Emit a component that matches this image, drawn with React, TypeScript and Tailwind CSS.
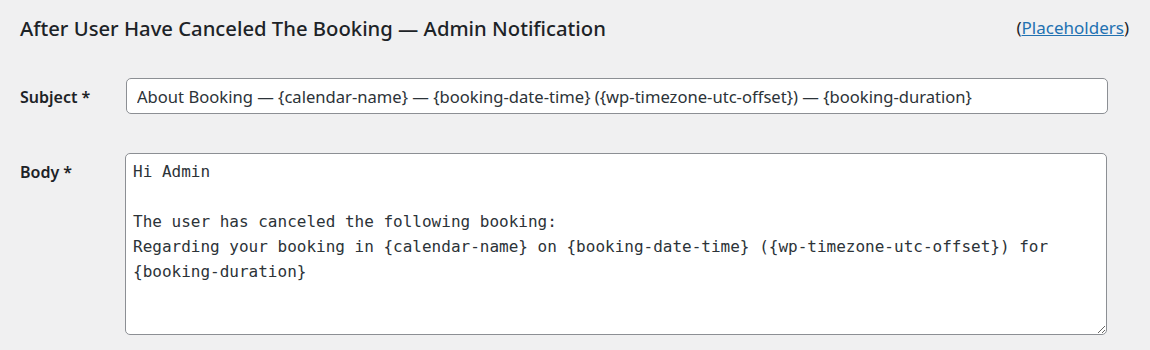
import React from "react";

const subject =
  "About Booking — {calendar-name} — {booking-date-time} ({wp-timezone-utc-offset}) — {booking-duration}";
const body =
  "Hi Admin\n\nThe user has canceled the following booking:\nRegarding your booking in {calendar-name} on {booking-date-time} ({wp-timezone-utc-offset}) for\n{booking-duration}";

export default function App() {
  return (
    <div className="w-[1150px] h-[350px] overflow-hidden bg-[#f0f0f1] text-[#1d2327] font-['Noto_Sans',sans-serif]">
      <div className="flex items-center justify-between pl-5 pr-[21px] pt-[14px] h-[42px]">
        <h2 className="text-[20.25px] leading-[28px] font-medium">
          After User Have Canceled The Booking — Admin Notification
        </h2>
        <div className="text-[17px] leading-[24px]">
          (<a href="#" className="text-[#2271b1] underline">Placeholders</a>)
        </div>
      </div>
      <div className="grid grid-cols-[106px_982px] pl-5 pt-[36px] gap-y-[39px]">
        <div className="text-[16px] font-semibold leading-[24px] pt-[7px]">Subject *</div>
        <input
          readOnly
          defaultValue={subject}
          className="h-[36px] w-[982px] rounded-[5px] border border-[#8c8f94] bg-white px-[10px] text-[16.6px] text-[#2c3338] outline-none"
        />
        <div className="text-[16px] font-semibold leading-[24px] pt-[7px]">Body *</div>
        <textarea
          readOnly
          defaultValue={body}
          className="h-[182px] w-[982px] -ml-px rounded-[5px] border border-[#8c8f94] bg-white px-[7px] pt-[5px] text-[16px] leading-[25px] text-[#2c3338] outline-none font-['DejaVu_Sans_Mono',monospace] resize-y"
        />
      </div>
    </div>
  );
}
